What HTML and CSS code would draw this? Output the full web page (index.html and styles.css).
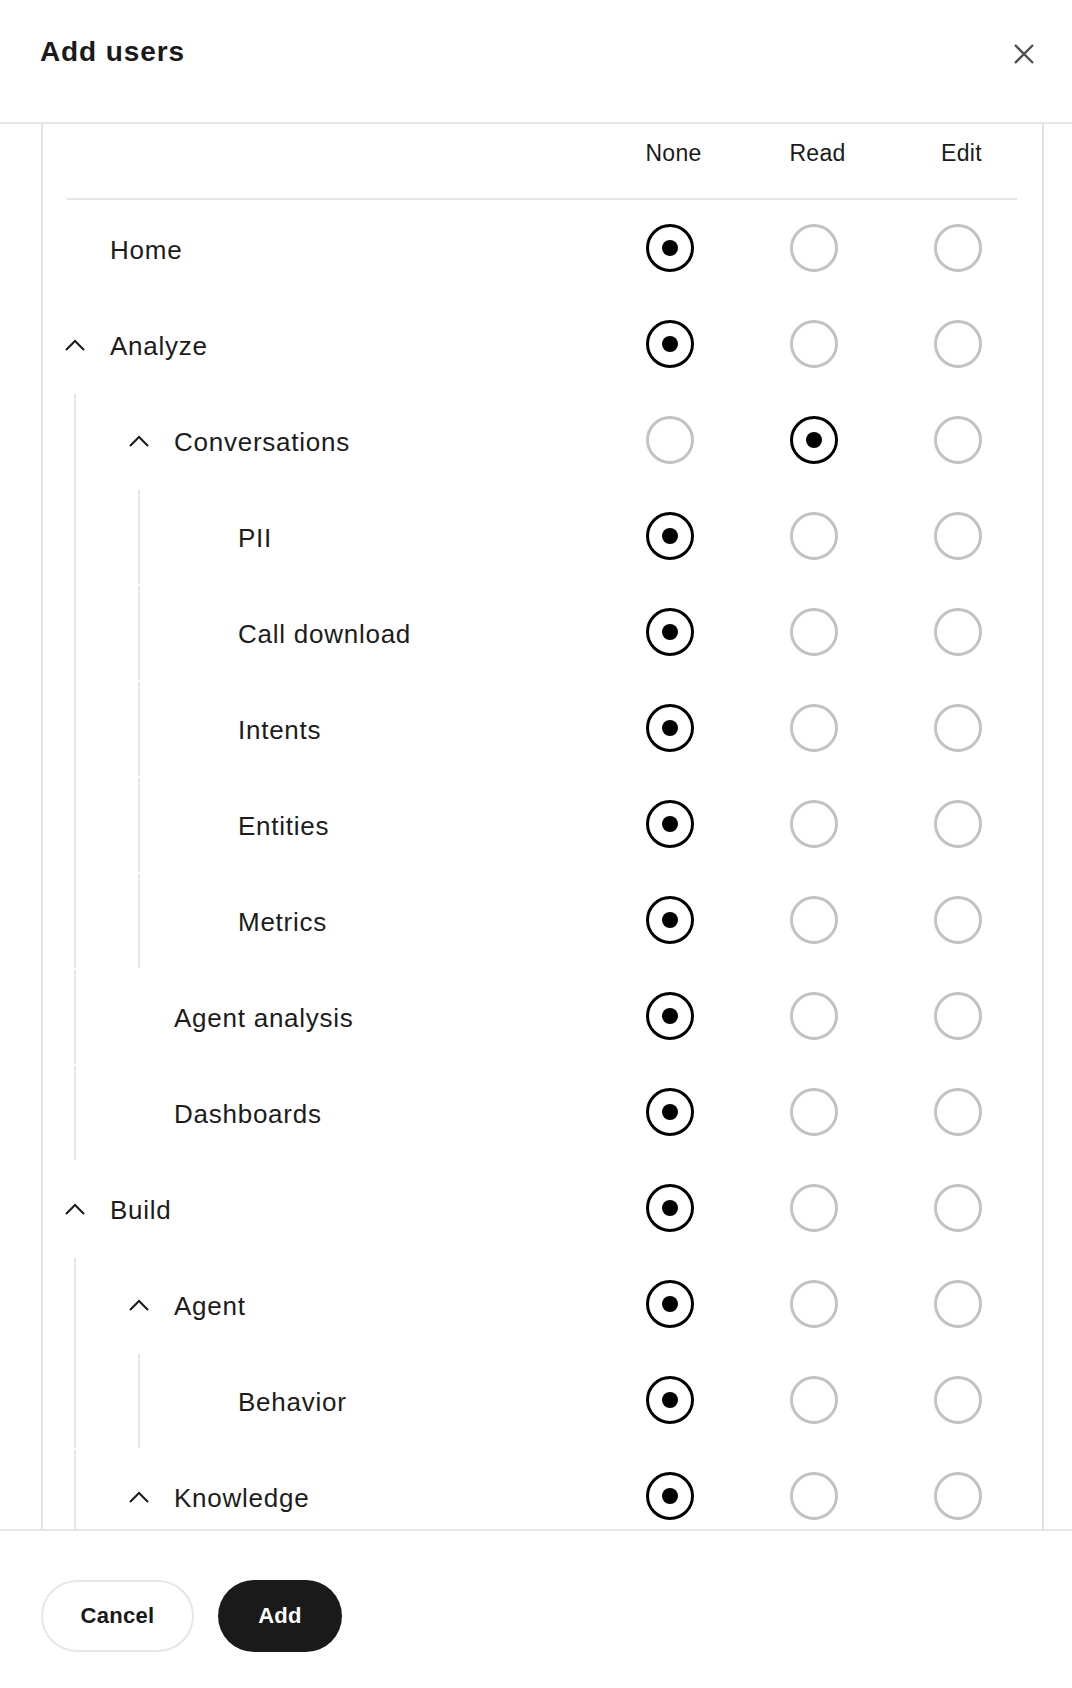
FILE: index.html
```html
<!DOCTYPE html>
<html lang="en">
<head>
<meta charset="utf-8">
<title>Add users</title>
<link rel="stylesheet" href="styles.css">
</head>
<body>
<div class="modal">
  <header class="modal-head">
    <h1 class="title">Add users</h1>
    <button class="close" aria-label="Close">
      <svg width="24" height="24" viewBox="0 0 24 24"><path d="M3 3 L21 21 M21 3 L3 21" fill="none" stroke="#4d4d55" stroke-width="2.3"/></svg>
    </button>
  </header>

  <div class="scroll">
    <div class="table">
      <div class="thead">
        <div></div>
        <div class="th">None</div>
        <div class="th">Read</div>
        <div class="th">Edit</div>
      </div>
      <div class="sep"></div>

      <div class="tree">
        <div class="item">
          <div class="row">
            <div class="name"><span class="chev-slot"></span><span class="label">Home</span></div>
            <div class="cell"><span class="radio on"></span></div>
            <div class="cell"><span class="radio"></span></div>
            <div class="cell"><span class="radio"></span></div>
          </div>
        </div>

        <div class="item">
          <div class="row">
            <div class="name"><span class="chev-slot"><svg class="chev" width="20" height="12" viewBox="0 0 20 12"><path d="M1 11 L10 2 L19 11" fill="none" stroke="#1a1a1a" stroke-width="2"/></svg></span><span class="label">Analyze</span></div>
            <div class="cell"><span class="radio on"></span></div>
            <div class="cell"><span class="radio"></span></div>
            <div class="cell"><span class="radio"></span></div>
          </div>
          <div class="children">
            <div class="item child">
              <div class="row">
                <div class="name"><span class="chev-slot"><svg class="chev" width="20" height="12" viewBox="0 0 20 12"><path d="M1 11 L10 2 L19 11" fill="none" stroke="#1a1a1a" stroke-width="2"/></svg></span><span class="label">Conversations</span></div>
                <div class="cell"><span class="radio"></span></div>
                <div class="cell"><span class="radio on"></span></div>
                <div class="cell"><span class="radio"></span></div>
              </div>
              <div class="children">
                <div class="item child">
                  <div class="row">
                    <div class="name"><span class="chev-slot"></span><span class="label">PII</span></div>
                    <div class="cell"><span class="radio on"></span></div>
                    <div class="cell"><span class="radio"></span></div>
                    <div class="cell"><span class="radio"></span></div>
                  </div>
                </div>
                <div class="item child">
                  <div class="row">
                    <div class="name"><span class="chev-slot"></span><span class="label">Call download</span></div>
                    <div class="cell"><span class="radio on"></span></div>
                    <div class="cell"><span class="radio"></span></div>
                    <div class="cell"><span class="radio"></span></div>
                  </div>
                </div>
                <div class="item child">
                  <div class="row">
                    <div class="name"><span class="chev-slot"></span><span class="label">Intents</span></div>
                    <div class="cell"><span class="radio on"></span></div>
                    <div class="cell"><span class="radio"></span></div>
                    <div class="cell"><span class="radio"></span></div>
                  </div>
                </div>
                <div class="item child">
                  <div class="row">
                    <div class="name"><span class="chev-slot"></span><span class="label">Entities</span></div>
                    <div class="cell"><span class="radio on"></span></div>
                    <div class="cell"><span class="radio"></span></div>
                    <div class="cell"><span class="radio"></span></div>
                  </div>
                </div>
                <div class="item child">
                  <div class="row">
                    <div class="name"><span class="chev-slot"></span><span class="label">Metrics</span></div>
                    <div class="cell"><span class="radio on"></span></div>
                    <div class="cell"><span class="radio"></span></div>
                    <div class="cell"><span class="radio"></span></div>
                  </div>
                </div>
              </div>
            </div>
            <div class="item child">
              <div class="row">
                <div class="name"><span class="chev-slot"></span><span class="label">Agent analysis</span></div>
                <div class="cell"><span class="radio on"></span></div>
                <div class="cell"><span class="radio"></span></div>
                <div class="cell"><span class="radio"></span></div>
              </div>
            </div>
            <div class="item child">
              <div class="row">
                <div class="name"><span class="chev-slot"></span><span class="label">Dashboards</span></div>
                <div class="cell"><span class="radio on"></span></div>
                <div class="cell"><span class="radio"></span></div>
                <div class="cell"><span class="radio"></span></div>
              </div>
            </div>
          </div>
        </div>

        <div class="item">
          <div class="row">
            <div class="name"><span class="chev-slot"><svg class="chev" width="20" height="12" viewBox="0 0 20 12"><path d="M1 11 L10 2 L19 11" fill="none" stroke="#1a1a1a" stroke-width="2"/></svg></span><span class="label">Build</span></div>
            <div class="cell"><span class="radio on"></span></div>
            <div class="cell"><span class="radio"></span></div>
            <div class="cell"><span class="radio"></span></div>
          </div>
          <div class="children">
            <div class="item child">
              <div class="row">
                <div class="name"><span class="chev-slot"><svg class="chev" width="20" height="12" viewBox="0 0 20 12"><path d="M1 11 L10 2 L19 11" fill="none" stroke="#1a1a1a" stroke-width="2"/></svg></span><span class="label">Agent</span></div>
                <div class="cell"><span class="radio on"></span></div>
                <div class="cell"><span class="radio"></span></div>
                <div class="cell"><span class="radio"></span></div>
              </div>
              <div class="children">
                <div class="item child">
                  <div class="row">
                    <div class="name"><span class="chev-slot"></span><span class="label">Behavior</span></div>
                    <div class="cell"><span class="radio on"></span></div>
                    <div class="cell"><span class="radio"></span></div>
                    <div class="cell"><span class="radio"></span></div>
                  </div>
                </div>
              </div>
            </div>
            <div class="item child">
              <div class="row">
                <div class="name"><span class="chev-slot"><svg class="chev" width="20" height="12" viewBox="0 0 20 12"><path d="M1 11 L10 2 L19 11" fill="none" stroke="#1a1a1a" stroke-width="2"/></svg></span><span class="label">Knowledge</span></div>
                <div class="cell"><span class="radio on"></span></div>
                <div class="cell"><span class="radio"></span></div>
                <div class="cell"><span class="radio"></span></div>
              </div>
            </div>
          </div>
        </div>
      </div>
    </div>
  </div>

  <footer class="modal-foot">
    <button class="btn btn-secondary">Cancel</button>
    <button class="btn btn-primary">Add</button>
  </footer>
</div>
</body>
</html>
```

FILE: styles.css
```css
* { box-sizing: border-box; }

html, body {
  margin: 0;
  padding: 0;
  background: #ffffff;
}

body {
  font-family: "Liberation Sans", Arial, sans-serif;
  color: #1a1a1a;
}

.modal {
  width: 1072px;
  height: 1688px;
  display: flex;
  flex-direction: column;
  background: #fff;
}

.modal-head {
  flex: 0 0 auto;
  height: 124px;
  border-bottom: 2px solid #e6e6e6;
  display: flex;
  justify-content: space-between;
  align-items: flex-start;
  padding: 38px 36px 0 40px;
}

.title {
  margin: 0;
  font-size: 28px;
  line-height: 28px;
  font-weight: 700;
  letter-spacing: 0.9px;
  color: #1a1a1a;
}

.close {
  margin-top: 4px;
  width: 24px;
  height: 24px;
  padding: 0;
  border: 0;
  background: none;
  display: flex;
}

.scroll {
  flex: 0 0 1405px;
  overflow: hidden;
}

.table {
  margin: 0 28px 0 41px;
  border-left: 2px solid #e2e2e2;
  border-right: 2px solid #e2e2e2;
  padding: 0 12px 0 24px;
  min-height: 100%;
}

.thead {
  display: grid;
  grid-template-columns: 1fr 144px 144px 144px;
  height: 74px;
  padding-top: 18px;
}

.th {
  font-size: 23px;
  line-height: 22px;
  letter-spacing: 0.3px;
  text-align: center;
  padding-left: 7px;
  color: #1a1a1a;
}

.sep {
  height: 2px;
  background: #e6e6e6;
  margin-right: 13px;
}

.row {
  display: grid;
  grid-template-columns: 1fr 144px 144px 144px;
  height: 96px;
  align-items: center;
}

.name {
  display: flex;
  align-items: center;
  padding-top: 3px;
  white-space: nowrap;
}

.chev-slot {
  width: 16px;
  margin-right: 27px;
  display: flex;
  justify-content: center;
  margin-top: -2px;
}

.chev {
  flex: 0 0 20px;
  margin: 0 -2px;
  display: block;
}

.label {
  font-size: 26px;
  line-height: 26px;
  letter-spacing: 0.75px;
  color: #1c1c1c;
}

.cell {
  display: flex;
  justify-content: center;
  align-items: center;
}

.radio {
  width: 48px;
  height: 48px;
  border-radius: 50%;
  border: 3px solid #c3c3c3;
  display: flex;
  align-items: center;
  justify-content: center;
  margin-top: -1px;
}

.radio.on {
  border-color: #000;
}

.radio.on::after {
  content: "";
  width: 16px;
  height: 16px;
  border-radius: 50%;
  background: #000;
}

.child {
  margin-left: 7px;
  padding-left: 57px;
  background: linear-gradient(#e6e6e6, #e6e6e6) no-repeat left bottom / 2px calc(100% - 2px);
}

.modal-foot {
  flex: 1 1 auto;
  border-top: 2px solid #e6e6e6;
  display: flex;
  align-items: flex-start;
  gap: 24px;
  padding: 49px 0 0 41px;
}

.btn {
  height: 72px;
  border-radius: 36px;
  font-family: "Liberation Sans", Arial, sans-serif;
  font-size: 22px;
  font-weight: 700;
  letter-spacing: 0.3px;
  padding: 0 20px;
  cursor: pointer;
}

.btn-secondary {
  width: 153px;
  background: #fff;
  color: #1a1a1a;
  border: 2px solid #e6e6e6;
}

.btn-primary {
  width: 124px;
  background: #1a1a1a;
  color: #fff;
  border: 0;
}
```
